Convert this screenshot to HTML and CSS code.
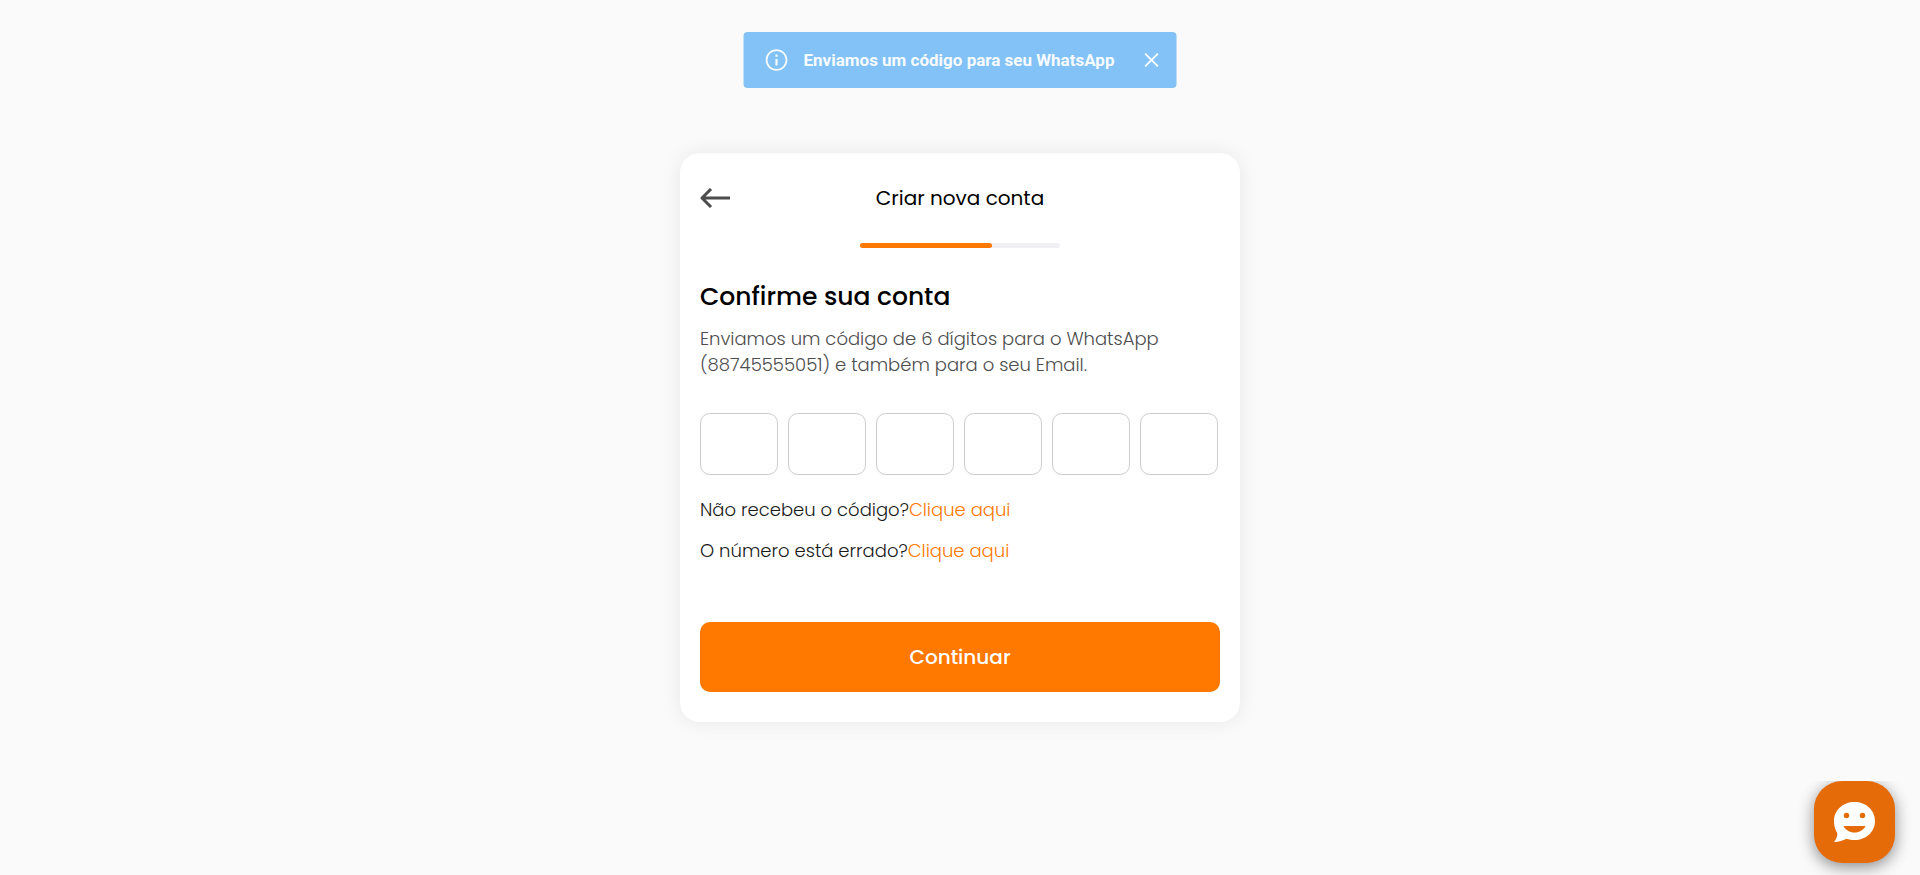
FILE: index.html
```html
<!DOCTYPE html>
<html lang="pt-BR">
<head>
<meta charset="utf-8">
<meta name="viewport" content="width=device-width, initial-scale=1">
<title>Criar nova conta</title>
<link rel="stylesheet" href="styles.css">
</head>
<body>
<div class="toast" role="status">
  <svg class="toast-icon" viewBox="0 0 24 24" aria-hidden="true"><path fill="currentColor" d="M11 7h2v2h-2zm0 4h2v6h-2zm1-9C6.480 2 2 6.480 2 12s4.480 10 10 10 10-4.480 10-10S17.520 2 12 2zm0 18.400a8.400 8.400 0 1 1 0-16.800 8.400 8.400 0 0 1 0 16.800z"/></svg>
  <span class="toast-text">Enviamos um código para seu WhatsApp</span>
  <button class="toast-close" type="button" aria-label="Fechar">
    <svg viewBox="0 0 14 14" aria-hidden="true"><path d="M.5 .5l13 13M13.500 .5L.5 13.500" fill="none" stroke="currentColor" stroke-width="1.800"/></svg>
  </button>
</div>
<main class="page">
  <form class="card">
    <header class="card-header">
      <button class="back" type="button" aria-label="Voltar">
        <svg viewBox="0 0 30 20" aria-hidden="true"><path d="M30 10H2M11 1L2 10l9 9" fill="none" stroke="currentColor" stroke-width="3" stroke-linejoin="round"/></svg>
      </button>
      <h1 class="card-title">Criar nova conta</h1>
    </header>
    <div class="progress"><div class="progress-fill"></div></div>
    <h2 class="heading">Confirme sua conta</h2>
    <p class="description">Enviamos um código de 6 dígitos para o WhatsApp (88745555051) e também para o seu Email.</p>
    <div class="code">
      <input class="digit" type="text" inputmode="numeric" maxlength="1" aria-label="Dígito 1">
      <input class="digit" type="text" inputmode="numeric" maxlength="1" aria-label="Dígito 2">
      <input class="digit" type="text" inputmode="numeric" maxlength="1" aria-label="Dígito 3">
      <input class="digit" type="text" inputmode="numeric" maxlength="1" aria-label="Dígito 4">
      <input class="digit" type="text" inputmode="numeric" maxlength="1" aria-label="Dígito 5">
      <input class="digit" type="text" inputmode="numeric" maxlength="1" aria-label="Dígito 6">
    </div>
    <div class="help">
      <p class="help-line">Não recebeu o código?<a class="link" href="#reenviar">Clique aqui</a></p>
      <p class="help-line">O número está errado?<a class="link" href="#numero">Clique aqui</a></p>
    </div>
    <button class="submit" type="submit">Continuar</button>
  </form>
</main>
<button class="chat" type="button" aria-label="Abrir chat">
  <svg viewBox="0 0 41 41" aria-hidden="true">
    <path fill="#fff" d="M20.500 0C32 0 41 8 41 19S32 38 20.500 38c-3 0-5.500-.4-8-1.300C9 38.500 5 40 0 40c2.500-3 3.500-6 3.300-9C1 27.500 0 23.500 0 19 0 8 9 0 20.500 0z"/>
    <circle cx="12.500" cy="13.500" r="2.700" fill="#e56b08"/><circle cx="28.500" cy="13.500" r="2.700" fill="#e56b08"/>
    <path fill="#e56b08" d="M9.500 24h22c-2 4-6 6.500-11 6.500S11.500 28 9.500 24z"/>
  </svg>
</button>
</body>
</html>
```
FILE: styles.css
```css
*, *::before, *::after {
  box-sizing: border-box;
}

body {
  margin: 0;
  background: #fafafa;
  color: #000;
  font-family: Poppins, Inter, sans-serif;
}

h1, h2, p {
  margin: 0;
}

button {
  border: 0;
  padding: 0;
  background: none;
  color: inherit;
  font-family: inherit;
  cursor: pointer;
}

svg {
  display: block;
}

.page {
  display: flex;
  align-items: center;
  justify-content: center;
  min-height: 100vh;
}

.toast {
  position: fixed;
  top: 32px;
  left: 50%;
  transform: translateX(-50%);
  display: flex;
  align-items: center;
  padding: 16px 18px 16px 20px;
  border-radius: 4px;
  background: #82c2f6;
  color: #f7fbff;
  font: 700 17px/24px Roboto, sans-serif;
  white-space: nowrap;
}

.toast-icon {
  width: 26px;
  height: 26px;
  margin: -1px 14px -1px 0;
}

.toast-close {
  margin-left: 30px;
}

.toast-close svg {
  width: 14px;
  height: 14px;
}

.card {
  width: 100%;
  max-width: 560px;
  padding: 30px 20px;
  border-radius: 20px;
  background: #fff;
  box-shadow: 0 0 20px rgba(0, 0, 0, 0.08);
}

.card-header {
  display: grid;
  grid-template-columns: 30px 1fr 30px;
  align-items: center;
}

.back {
  color: #4d4d4d;
}

.back svg {
  width: 30px;
  height: 20px;
}

.card-title {
  font-size: 20px;
  line-height: 30px;
  font-weight: 400;
  text-align: center;
}

.progress {
  width: 200px;
  height: 5px;
  margin: 30px auto;
  border-radius: 5px;
  background: #f0f0f4;
}

.progress-fill {
  width: 66%;
  height: 100%;
  border-radius: 5px;
  background: #ff7800;
}

.heading {
  margin-bottom: 10px;
  font-size: 25px;
  line-height: 38px;
  font-weight: 500;
}

.description {
  color: #4d4d4d;
  font-size: 18px;
  line-height: 26px;
  font-weight: 300;
}

.code {
  display: grid;
  grid-template-columns: repeat(6, 1fr);
  gap: 10px;
  margin: 35px 2px 20px 0;
}

.digit {
  width: 100%;
  min-width: 0;
  height: 62px;
  border: 1px solid #ccc;
  border-radius: 10px;
  background: #fff;
  font: 400 24px/30px Poppins, Inter, sans-serif;
  text-align: center;
}

.help {
  display: grid;
  gap: 11px;
  margin-bottom: 56px;
}

.help-line {
  color: #1a1a1a;
  font-size: 18px;
  line-height: 30px;
  font-weight: 300;
}

.link {
  color: #ff7800;
  text-decoration: none;
}

.submit {
  display: block;
  width: 100%;
  height: 70px;
  border-radius: 10px;
  background: #ff7800;
  color: #fff;
  font-size: 20px;
  font-weight: 500;
}

.chat {
  position: fixed;
  right: 25px;
  bottom: 12px;
  display: grid;
  place-items: center;
  width: 81px;
  height: 82px;
  border-radius: 28px;
  background: #e56b08;
  box-shadow: 0 4px 16px rgba(0, 0, 0, 0.45);
  clip-path: inset(0 -25px -12px -25px);
}

.chat svg {
  width: 41px;
  height: 41px;
}
```
